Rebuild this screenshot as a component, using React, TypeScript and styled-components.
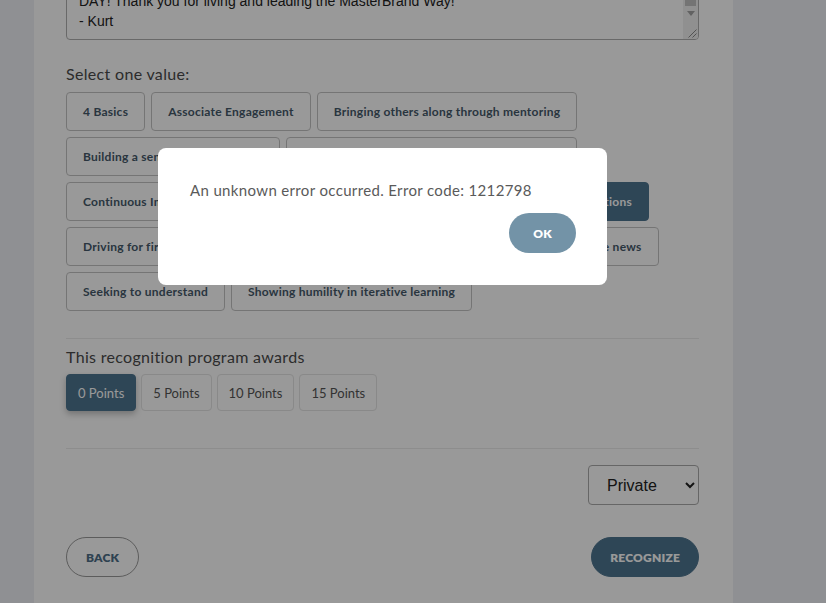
import React, { useEffect, useRef } from "react";
import styled, { createGlobalStyle } from "styled-components";

const GlobalStyle = createGlobalStyle`
  html, body { margin: 0; padding: 0; }
  body {
    background: #eef1f5;
    font-family: "Lato", "Noto Sans", sans-serif;
    overflow: hidden;
    height: 603px;
  }
  * { box-sizing: border-box; }
`;

const Page = styled.div`
  padding-left: 34px;
  height: 603px;
  overflow: hidden;
`;

const Card = styled.main`
  width: 699px;
  background: #ffffff;
  margin-top: -60px;
  padding: 0 34px 40px 32px;
  min-height: 700px;
`;

const MessageBox = styled.div`
  position: relative;
  height: 100px;
`;

const Message = styled.textarea`
  display: block;
  width: 100%;
  height: 100%;
  resize: none;
  border: 1px solid #b0b0b0;
  border-radius: 4px;
  padding: 8px 28px 8px 12px;
  font-family: "Liberation Sans", Arial, sans-serif;
  font-size: 14px;
  line-height: 19.5px;
  color: #222;
  overflow: hidden;
`;

const Scrollbar = styled.div`
  position: absolute;
  top: 1px;
  right: 1px;
  bottom: 1px;
  width: 15px;
  display: flex;
  flex-direction: column;
  background: #f1f1f1;
  border-radius: 0 3px 3px 0;
  overflow: hidden;
`;

const Track = styled.div`
  flex: 1;
  display: flex;
  flex-direction: column;
  justify-content: flex-end;
  padding: 0 2px;
`;

const Thumb = styled.div`
  height: 40px;
  background: #c1c1c1;
`;

const ArrowButton = styled.div`
  height: 15px;
  display: flex;
  align-items: center;
  justify-content: center;
`;

const Corner = styled.div`
  height: 18px;
  display: flex;
  align-items: flex-end;
  justify-content: flex-end;
  padding: 0 1px 1px 0;
`;

const Label = styled.div<{ $top: number }>`
  margin-top: ${(p) => p.$top}px;
  font-size: 16px;
  letter-spacing: 0.32px;
  line-height: 20px;
  color: #4a4a4a;
`;

const Values = styled.div`
  display: flex;
  flex-wrap: wrap;
  gap: 6px;
  margin-top: 8px;
`;

const ValueButton = styled.button<{ $selected?: boolean }>`
  height: 39px;
  padding: 0 16px;
  border-radius: 4px;
  border: 1px solid ${(p) => (p.$selected ? "#4e758f" : "#c4c4c4")};
  background: ${(p) => (p.$selected ? "#4e758f" : "#ffffff")};
  color: ${(p) => (p.$selected ? "#ffffff" : "#45596a")};
  font-family: "Lato", sans-serif;
  font-weight: 700;
  font-size: 12px;
  letter-spacing: 0.25px;
  cursor: pointer;
`;

const Divider = styled.hr<{ $top: number }>`
  border: 0;
  border-top: 1px solid #ececec;
  margin: ${(p) => p.$top}px 0 0;
`;

const Points = styled.div`
  display: flex;
  gap: 5px;
  margin-top: 7px;
`;

const PointButton = styled.button<{ $selected?: boolean }>`
  height: 37px;
  padding: 0 11px;
  min-width: 69px;
  border-radius: 4px;
  border: 1px solid ${(p) => (p.$selected ? "#4e758f" : "#e4e4e4")};
  background: ${(p) => (p.$selected ? "#4e758f" : "#ffffff")};
  color: ${(p) => (p.$selected ? "#ffffff" : "#555555")};
  box-shadow: ${(p) => (p.$selected ? "0 3px 6px rgba(0,0,0,0.25)" : "none")};
  font-family: "Lato", sans-serif;
  font-size: 13px;
`;

const PrivacyRow = styled.div`
  display: flex;
  justify-content: flex-end;
  margin-top: 16px;
`;

const PrivacySelect = styled.select`
  width: 111px;
  height: 40px;
  border: 1px solid #aaaaaa;
  border-radius: 4px;
  background: #fff;
  padding: 0 8px 0 14px;
  font-family: "Liberation Sans", Arial, sans-serif;
  font-size: 16px;
  color: #222;
`;

const ActionRow = styled.div`
  display: flex;
  justify-content: space-between;
  margin-top: 32px;
`;

const PillButton = styled.button<{ $primary?: boolean }>`
  height: 40px;
  padding: 0 ${(p) => (p.$primary ? 18 : 19)}px;
  border-radius: 20px;
  border: 1px solid ${(p) => (p.$primary ? "#4e758f" : "#9a9a9a")};
  background: ${(p) => (p.$primary ? "#4e758f" : "#ffffff")};
  color: ${(p) => (p.$primary ? "#ffffff" : "#4e6e88")};
  font-family: "Lato", sans-serif;
  font-weight: 800;
  font-size: 12px;
  letter-spacing: 0.2px;
`;

const Overlay = styled.div`
  position: fixed;
  inset: 0;
  background: rgba(0, 0, 0, 0.4);
`;

const Dialog = styled.div`
  position: absolute;
  left: 158px;
  top: 148px;
  width: 449px;
  background: #ffffff;
  border-radius: 8px;
  padding: 32px 31px 32px 32px;
  display: flex;
  flex-direction: column;
`;

const DialogText = styled.p`
  margin: 0;
  font-size: 15px;
  letter-spacing: 0.35px;
  line-height: 20px;
  color: #5a5a5a;
`;

const OkButton = styled.button`
  align-self: flex-end;
  margin-top: 13px;
  width: 67px;
  height: 40px;
  border-radius: 20px;
  border: 0;
  background: #7393a7;
  color: #ffffff;
  font-family: "Lato", sans-serif;
  font-weight: 800;
  font-size: 12px;
`;

const values = [
  "4 Basics",
  "Associate Engagement",
  "Bringing others along through mentoring",
  "Building a sense of togetherness",
  "Celebrating successes and championing safety",
  "Continuous Improvement",
  "Customer-centered decisions",
  "Delivering on all expectations",
  "Driving for first time quality",
  "Embracing the change",
  "Sharing both the good and the news",
  "Seeking to understand",
  "Showing humility in iterative learning",
];

const selectedValue = "Delivering on all expectations";

const message =
  "Hi there,\n\nThank you for all of your hard work on the launch this quarter.\nYou go above and beyond for our team and our customers EVERY\nDAY! Thank you for living and leading the MasterBrand Way!\n- Kurt";

export default function App() {
  const ref = useRef<HTMLTextAreaElement>(null);
  useEffect(() => {
    if (ref.current) ref.current.scrollTop = ref.current.scrollHeight;
  }, []);
  return (
    <>
      <GlobalStyle />
      <Page>
        <Card>
          <MessageBox>
            <Message ref={ref} defaultValue={message} spellCheck={false} />
            <Scrollbar aria-hidden>
              <Track>
                <Thumb />
              </Track>
              <ArrowButton>
                <svg width="8" height="5" viewBox="0 0 8 5">
                  <path d="M0 0h8L4 5z" fill="#a3a3a3" />
                </svg>
              </ArrowButton>
              <Corner>
                <svg width="11" height="11" viewBox="0 0 11 11">
                  <path d="M10.5 2.5L2.5 10.5M10.5 6.5L6.5 10.5" stroke="#8a8a8a" strokeWidth="1" fill="none" />
                </svg>
              </Corner>
            </Scrollbar>
          </MessageBox>
          <Label $top={24}>Select one value:</Label>
          <Values>
            {values.map((v) => (
              <ValueButton key={v} $selected={v === selectedValue}>
                {v}
              </ValueButton>
            ))}
          </Values>
          <Divider $top={27} />
          <Label $top={8}>This recognition program awards</Label>
          <Points>
            {["0 Points", "5 Points", "10 Points", "15 Points"].map((p, i) => (
              <PointButton key={p} $selected={i === 0}>
                {p}
              </PointButton>
            ))}
          </Points>
          <Divider $top={37} />
          <PrivacyRow>
            <PrivacySelect defaultValue="Private">
              <option>Private</option>
              <option>Public</option>
            </PrivacySelect>
          </PrivacyRow>
          <ActionRow>
            <PillButton>BACK</PillButton>
            <PillButton $primary>RECOGNIZE</PillButton>
          </ActionRow>
        </Card>
      </Page>
      <Overlay>
        <Dialog>
          <DialogText>An unknown error occurred. Error code: 1212798</DialogText>
          <OkButton>OK</OkButton>
        </Dialog>
      </Overlay>
    </>
  );
}
